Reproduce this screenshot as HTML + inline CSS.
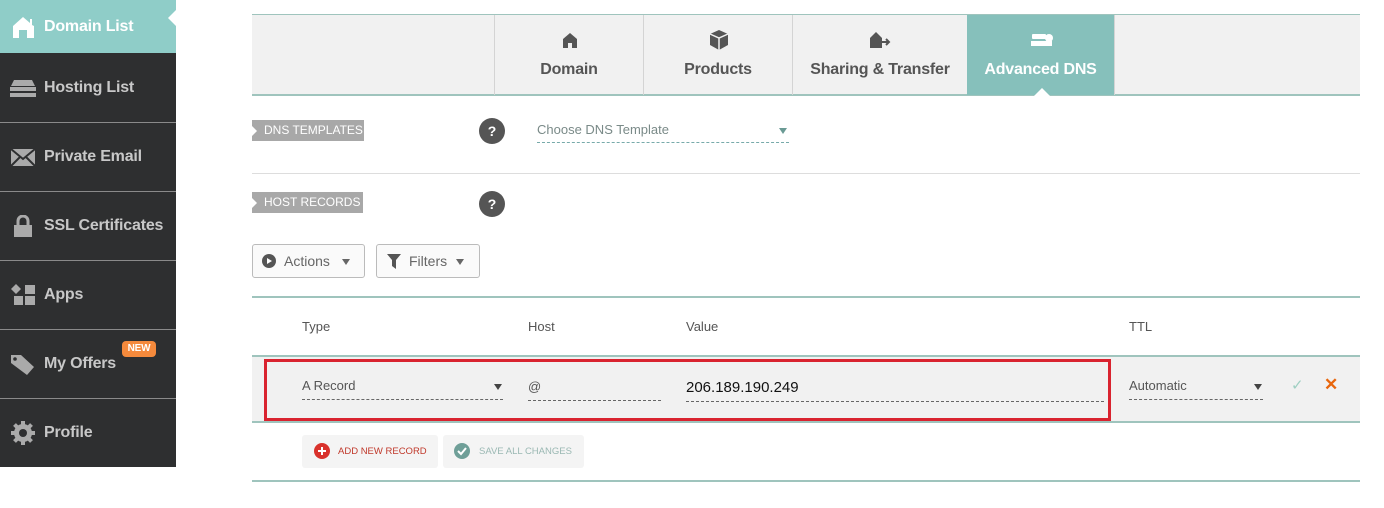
<!DOCTYPE html>
<html><head><style>
*{box-sizing:border-box;margin:0;padding:0}
body{width:1384px;height:508px;background:#fff;font-family:"Liberation Sans",sans-serif;position:relative;overflow:hidden}
.abs{position:absolute}
.side{left:0;top:0;width:176px;height:467px;background:#2e2f30}
.item{position:absolute;left:0;width:176px;height:69px;border-top:1px solid #8a8a8a;color:#c8c8c8;font-size:16px;font-weight:bold;letter-spacing:-0.2px}
.item span{position:absolute;left:44px;top:50%;transform:translateY(-50%)}
.ic{position:absolute;left:10px;top:50%;transform:translateY(-50%);width:26px;height:22px}
.tab{position:absolute;top:15px;height:80px;border-left:1px solid #d4d4d4;text-align:center;color:#555;font-size:16px;font-weight:bold;letter-spacing:-0.2px}
.tab .t{position:absolute;top:46px;left:0;right:0}
.tag{position:absolute;left:252px;height:21px;background:#a8a8a8;color:#fff;font-size:12px;line-height:21px;padding-left:12px}
.tag:before{content:"";position:absolute;left:0;top:6px;border-left:5px solid #fff;border-top:5px solid transparent;border-bottom:5px solid transparent}
.q{position:absolute;width:26px;height:26px;border-radius:50%;background:#555;color:#fff;font-weight:bold;font-size:14px;text-align:center;line-height:26px}
.btn{position:absolute;top:244px;height:34px;border:1px solid #bbb;border-radius:3px;background:#fafafa;color:#666;font-size:14px;line-height:32px}
.hl{position:absolute;left:252px;width:1108px;height:2px;background:#9fc4bd}
.th{position:absolute;top:319px;font-size:13px;color:#555}
.fld{position:absolute;border-bottom:1px dashed #666;font-size:13px;color:#555;height:22px;line-height:16px}
.car{position:absolute;border-top:6px solid #444;border-left:4px solid transparent;border-right:4px solid transparent}
</style></head><body>
<div class="abs side">
 <div class="item" style="top:0;height:53px;background:#8fcdc8;border:none;color:#fff"><svg class="ic" viewBox="0 0 26 22"><path d="M3 10 L13 1 L20 7 V3 h2 V9 L24 10 V22 H17 V14 H9 V22 H3Z" fill="#fff"/></svg><span>Domain List</span></div>
 <div class="abs" style="left:168px;top:9px;border-right:9px solid #fff;border-top:9px solid transparent;border-bottom:9px solid transparent"></div>
 <div class="item" style="top:53px;border:none"><svg class="ic" viewBox="0 0 26 22"><path d="M4 3h18l3 6H1z" fill="#aaa"/><rect x="0" y="10" width="26" height="4" fill="#aaa"/><rect x="0" y="16" width="26" height="4" fill="#aaa"/></svg><span>Hosting List</span></div>
 <div class="item" style="top:122px"><svg class="ic" viewBox="0 0 26 22"><rect x="1" y="3" width="24" height="17" fill="#aaa"/><path d="M1 3 L13 13 L25 3 M1 20 L10 11 M25 20 L16 11" stroke="#2e2f30" stroke-width="2" fill="none"/></svg><span>Private Email</span></div>
 <div class="item" style="top:191px"><svg class="ic" viewBox="0 0 26 22"><path d="M8 10V6a5 5 0 0 1 10 0v4" stroke="#aaa" stroke-width="3" fill="none"/><rect x="4" y="10" width="18" height="12" fill="#aaa"/></svg><span>SSL Certificates</span></div>
 <div class="item" style="top:260px"><svg class="ic" viewBox="0 0 26 22"><path d="M6 0l5 5-5 5-5-5z" fill="#aaa"/><rect x="15" y="1" width="10" height="9" fill="#aaa"/><rect x="4" y="12" width="9" height="9" fill="#aaa"/><rect x="15" y="12" width="10" height="9" fill="#aaa"/></svg><span>Apps</span></div>
 <div class="item" style="top:329px"><svg class="ic" viewBox="0 0 26 22"><path d="M1 2h10l13 12-7 8L1 10z" fill="#aaa"/><circle cx="5" cy="6" r="1.8" fill="#2e2f30"/></svg><span>My Offers</span><div class="abs" style="left:122px;top:11px;width:34px;height:16px;background:#f58a3c;border-radius:4px;color:#fff;font-size:10px;line-height:16px;text-align:center">NEW</div></div>
 <div class="item" style="top:398px"><svg class="ic" viewBox="0 0 26 26" style="height:26px"><circle cx="13" cy="13" r="9" fill="#aaa"/><g stroke="#aaa" stroke-width="4"><path d="M13 1v24M1 13h24M4.5 4.5l17 17M21.5 4.5l-17 17"/></g><circle cx="13" cy="13" r="4" fill="#2e2f30"/></svg><span>Profile</span></div>
</div>

<div class="abs" style="left:252px;top:14px;width:1108px;height:82px;background:#f1f1f1;border-top:1px solid #9fc4bd;border-bottom:2px solid #9fc4bd"></div>
<div class="tab" style="left:494px;width:149px"><svg class="abs" style="left:67px;top:17px" width="16" height="16" viewBox="0 0 16 16"><path d="M1 7L8 1l7 6v9h-5v-5H6v5H1z" fill="#555"/></svg><div class="t">Domain</div></div>
<div class="tab" style="left:643px;width:149px"><svg class="abs" style="left:64px;top:14px" width="22" height="22" viewBox="0 0 22 22"><path d="M11 1l9 4v11l-9 5-9-5V5z" fill="#555"/><path d="M2 5l9 4 9-4M11 9v12" stroke="#f1f1f1" stroke-width="1.5" fill="none"/></svg><div class="t">Products</div></div>
<div class="tab" style="left:792px;width:175px"><svg class="abs" style="left:76px;top:16px" width="24" height="18" viewBox="0 0 24 18"><path d="M1 7L7 1l6 6v10H1z" fill="#555"/><path d="M11 11h9M17 8l3 3-3 3" stroke="#555" stroke-width="2" fill="none"/></svg><div class="t">Sharing &amp; Transfer</div></div>
<div class="tab" style="left:967px;width:148px;background:#86c0bb;color:#fff;border-right:1px solid #d4d4d4;border-left:none"><svg class="abs" style="left:63px;top:18px" width="24" height="16" viewBox="0 0 24 16"><rect x="2" y="1" width="14" height="5" rx="1" fill="#fff"/><rect x="1" y="8" width="21" height="5" fill="#fff"/><circle cx="19" cy="5" r="4" fill="#fff"/></svg><div class="t">Advanced DNS</div></div>
<div class="abs" style="left:1034px;top:88px;border-bottom:8px solid #fff;border-left:8px solid transparent;border-right:8px solid transparent"></div>

<div class="tag" style="top:120px;width:112px">DNS TEMPLATES</div>
<div class="q" style="left:479px;top:118px">?</div>
<div class="abs" style="left:537px;top:122px;width:252px;height:21px;border-bottom:1px dashed #7aa;color:#7a8a88;font-size:13px">Choose DNS Template</div>
<div class="car" style="left:779px;top:128px;border-top-color:#6a9a94"></div>
<div class="abs" style="left:252px;top:173px;width:1108px;height:1px;background:#ddd"></div>
<div class="tag" style="top:192px;width:111px">HOST RECORDS</div>
<div class="q" style="left:479px;top:191px">?</div>

<div class="btn" style="left:252px;width:113px"><svg class="abs" style="left:9px;top:9px" width="14" height="14"><circle cx="7" cy="7" r="7" fill="#555"/><path d="M5 4l5 3-5 3z" fill="#fff"/></svg><span class="abs" style="left:31px">Actions</span><div class="car" style="left:89px;top:14px;border-top-color:#666"></div></div>
<div class="btn" style="left:376px;width:104px"><svg class="abs" style="left:10px;top:9px" width="14" height="15"><path d="M0 0h14L9 6v9L5 12V6z" fill="#555"/></svg><span class="abs" style="left:32px">Filters</span><div class="car" style="left:79px;top:14px;border-top-color:#666"></div></div>

<div class="hl" style="top:296px"></div>
<div class="th" style="left:302px">Type</div>
<div class="th" style="left:528px">Host</div>
<div class="th" style="left:686px">Value</div>
<div class="th" style="left:1129px">TTL</div>
<div class="hl" style="top:355px"></div>
<div class="abs" style="left:252px;top:357px;width:1108px;height:64px;background:#f1f1f1"></div>
<div class="hl" style="top:421px"></div>
<div class="abs" style="left:264px;top:359px;width:847px;height:62px;border:3px solid #d9232f"></div>
<div class="fld" style="left:302px;top:378px;width:201px">A Record</div>
<div class="car" style="left:494px;top:384px"></div>
<div class="fld" style="left:528px;top:379px;width:133px">@</div>
<div class="fld" style="left:686px;top:380px;width:418px;color:#111;font-size:15px">206.189.190.249</div>
<div class="fld" style="left:1129px;top:378px;width:134px">Automatic</div>
<div class="car" style="left:1254px;top:384px"></div>
<div class="abs" style="left:1291px;top:376px;color:#9fcfc2;font-size:15px">✓</div>
<div class="abs" style="left:1324px;top:375px;color:#e8660d;font-size:17px;font-weight:bold">✕</div>

<div class="abs" style="left:302px;top:435px;width:136px;height:33px;background:#f4f4f4;border-radius:3px"></div>
<svg class="abs" style="left:314px;top:443px" width="16" height="16"><circle cx="8" cy="8" r="8" fill="#d9322c"/><path d="M8 4v8M4 8h8" stroke="#fff" stroke-width="2"/></svg>
<div class="abs" style="left:338px;top:446px;color:#c0392b;font-size:9.5px">ADD NEW RECORD</div>
<div class="abs" style="left:443px;top:435px;width:141px;height:33px;background:#f4f4f4;border-radius:3px"></div>
<svg class="abs" style="left:454px;top:443px" width="16" height="16"><circle cx="8" cy="8" r="8" fill="#6f9f98"/><path d="M4 8l3 3 5-6" stroke="#fff" stroke-width="2" fill="none"/></svg>
<div class="abs" style="left:479px;top:446px;color:#9ab8b3;font-size:9.5px">SAVE ALL CHANGES</div>
<div class="hl" style="top:480px"></div>
</body></html>
